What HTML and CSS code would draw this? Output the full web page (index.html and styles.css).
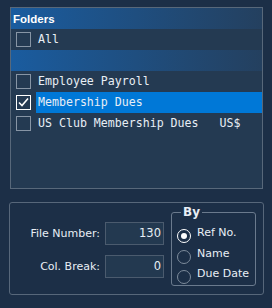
FILE: index.html
```html
<!doctype html>
<html lang="en">
<head>
<meta charset="UTF-8">
<title>Folders</title>
<link rel="stylesheet" href="styles.css">
</head>
<body>
<div class="list">
	<div class="band head">Folders</div>
	<div class="row"><span class="box"></span><span class="name">All</span></div>
	<div class="band"></div>
	<div class="row"><span class="box"></span><span class="name">Employee Payroll</span></div>
	<div class="row"><span class="box on"><svg width="13" height="13" viewBox="0 0 13 13"><path d="M2 6.5 L5 9.5 L11 2.5" fill="none" stroke="#fff" stroke-width="1.6"/></svg></span><span class="name sel">Membership Dues</span></div>
	<div class="row"><span class="box"></span><span class="name">US Club Membership Dues   US$</span></div>
</div>

<div class="group">
	<div class="fields">
		<div class="field"><label>File Number:</label><div class="input">130</div></div>
		<div class="field"><label>Col. Break:</label><div class="input">0</div></div>
	</div>
	<div class="by">
		<span class="legend">By</span>
		<div class="opt"><span class="radio on"></span>Ref No.</div>
		<div class="opt"><span class="radio"></span>Name</div>
		<div class="opt"><span class="radio"></span>Due Date</div>
	</div>
</div>
</body>
</html>
```

FILE: styles.css
```css
body{margin:0;padding:7px 9px 0 10px;background:#1c2f47;color:#e8eef5;font-family:"DejaVu Sans",sans-serif;font-size:11px;}
.list{border:1px solid #58687a;background:#243a52;height:180px;}
.band{height:21px;background:linear-gradient(to right,#1a5c9f,#24405f);}
.head{font-family:"Liberation Sans",sans-serif;font-weight:bold;font-size:11.5px;line-height:22px;padding-left:2px;color:#fff;}
.row{height:21px;display:flex;align-items:center;padding-left:5px;font-family:"DejaVu Sans Mono",monospace;font-size:11.6px;}
.box{width:13px;height:13px;border:1px solid #8795a5;margin-right:5px;flex:none;display:flex;align-items:center;justify-content:center;}
.box.on{border-color:#fff;}
.name{flex:1;height:21px;line-height:21px;padding-left:2px;white-space:pre;}
.name.sel{background:#0078d7;}
.group{margin-top:13px;margin-right:-1px;margin-left:-1px;height:91px;border:1px solid #57677a;border-radius:3px;display:flex;}
.fields{width:154px;padding-top:19px;display:flex;flex-direction:column;gap:10px;}
.field{display:flex;align-items:center;justify-content:flex-end;gap:5px;}
.field label{white-space:nowrap;}
.input{width:55px;height:21px;border:1px solid #4b5b6e;background:#233950;text-align:right;line-height:21px;padding-right:2px;font-size:11.5px;}
.by{position:relative;margin:9px 0 0 7px;width:85px;height:74px;border:1px solid #6a7a8d;border-radius:3px;padding-top:14px;box-sizing:border-box;}
.legend{position:absolute;top:-7px;left:9px;padding:0 2px;background:#1c2f47;font-weight:bold;font-size:12px;line-height:13px;}
.opt{display:flex;align-items:flex-start;height:20.5px;padding-left:5px;font-size:11px;line-height:12px;}
.radio{width:12px;height:12px;border:1.3px solid #7d8b9b;border-radius:50%;margin:2px 6px 0 0;box-sizing:content-box;position:relative;flex:none;}
.radio.on{border-color:#fff;}
.radio.on::after{content:"";position:absolute;left:3px;top:3px;width:6px;height:6px;border-radius:50%;background:#fff;}
```
